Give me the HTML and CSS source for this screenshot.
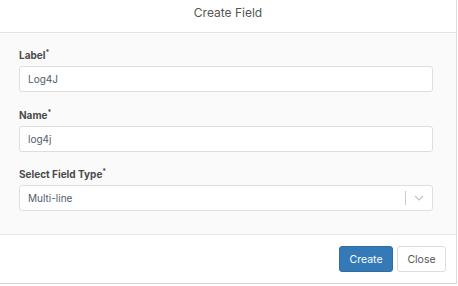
FILE: index.html
```html
<!DOCTYPE html>
<html lang="en">
<head>
    <meta charset="UTF-8">
    <title>Create Field</title>
    <link rel="stylesheet" href="styles.css">
</head>
<body>
    <div class="modal">
        <div class="modal-header">Create Field</div>

        <div class="modal-body">
            <div class="field">
                <label>Label<sup>*</sup></label>
                <input type="text" value="Log4J">
            </div>

            <div class="field">
                <label>Name<sup>*</sup></label>
                <input type="text" value="log4j">
            </div>

            <div class="field field-last">
                <label>Select Field Type<sup>*</sup></label>
                <div class="select">
                    <span class="select-value">Multi-line</span>
                    <span class="select-sep"></span>
                    <svg class="select-arrow" width="10" height="6" viewBox="0 0 10 6" fill="none" stroke="#c4c4c4" stroke-width="1.2">
                        <path d="M1 1l4 4 4-4"></path>
                    </svg>
                </div>
            </div>
        </div>

        <div class="modal-footer">
            <button class="btn btn-primary">Create</button>
            <button class="btn btn-default">Close</button>
        </div>
    </div>
</body>
</html>
```

FILE: styles.css
```css
* {
    margin: 0;
    padding: 0;
    box-sizing: border-box;
}

body {
    background: #fff;
    font-family: Inter, "Liberation Sans", sans-serif;
}

.modal {
    width: 457px;
    border-right: 1px solid #ddd;
    border-bottom: 1px solid #d4d4d4;
    background: #fff;
}

.modal-header {
    height: 33px;
    border-bottom: 1px solid #e3e3e3;
    text-align: center;
    font-size: 12px;
    line-height: 26px;
    color: #555;
}

.modal-body {
    background: #fafafa;
    padding: 15px 23px 23px 19px;
    border-bottom: 1px solid #e8e8e8;
}

.field + .field {
    margin-top: 16px;
}

.field-last {
    margin-top: 15px !important;
}

.field label {
    display: block;
    font-size: 10px;
    font-weight: 700;
    color: #4a4a4a;
    line-height: 14px;
    margin-bottom: 4px;
}

.field sup {
    font-size: 7px;
    vertical-align: top;
    position: relative;
    top: -2px;
}

.field input,
.select {
    display: block;
    width: 100%;
    height: 26px;
    border: 1px solid #dedede;
    border-radius: 3px;
    background: #fff;
    padding: 0 8px;
    font-family: Inter, "Liberation Sans", sans-serif;
    font-size: 10px;
    color: #4f5d6b;
    outline: none;
}

.select {
    display: flex;
    align-items: center;
    padding-right: 8px;
}

.select-value {
    flex: 1;
}

.select-sep {
    width: 1px;
    height: 14px;
    background: #ccc;
    margin-right: 8px;
}

.modal-footer {
    display: flex;
    justify-content: flex-end;
    gap: 4px;
    padding: 11px 10px 11px 0;
}

.btn {
    height: 26px;
    border-radius: 3px;
    font-family: Inter, "Liberation Sans", sans-serif;
    font-size: 10.5px;
    cursor: pointer;
}

.btn-primary {
    background: #337ab7;
    border: 1px solid #2e6da4;
    color: #fff;
    width: 54px;
}

.btn-default {
    background: #fff;
    border: 1px solid #ddd;
    color: #555;
    width: 49px;
}
```
